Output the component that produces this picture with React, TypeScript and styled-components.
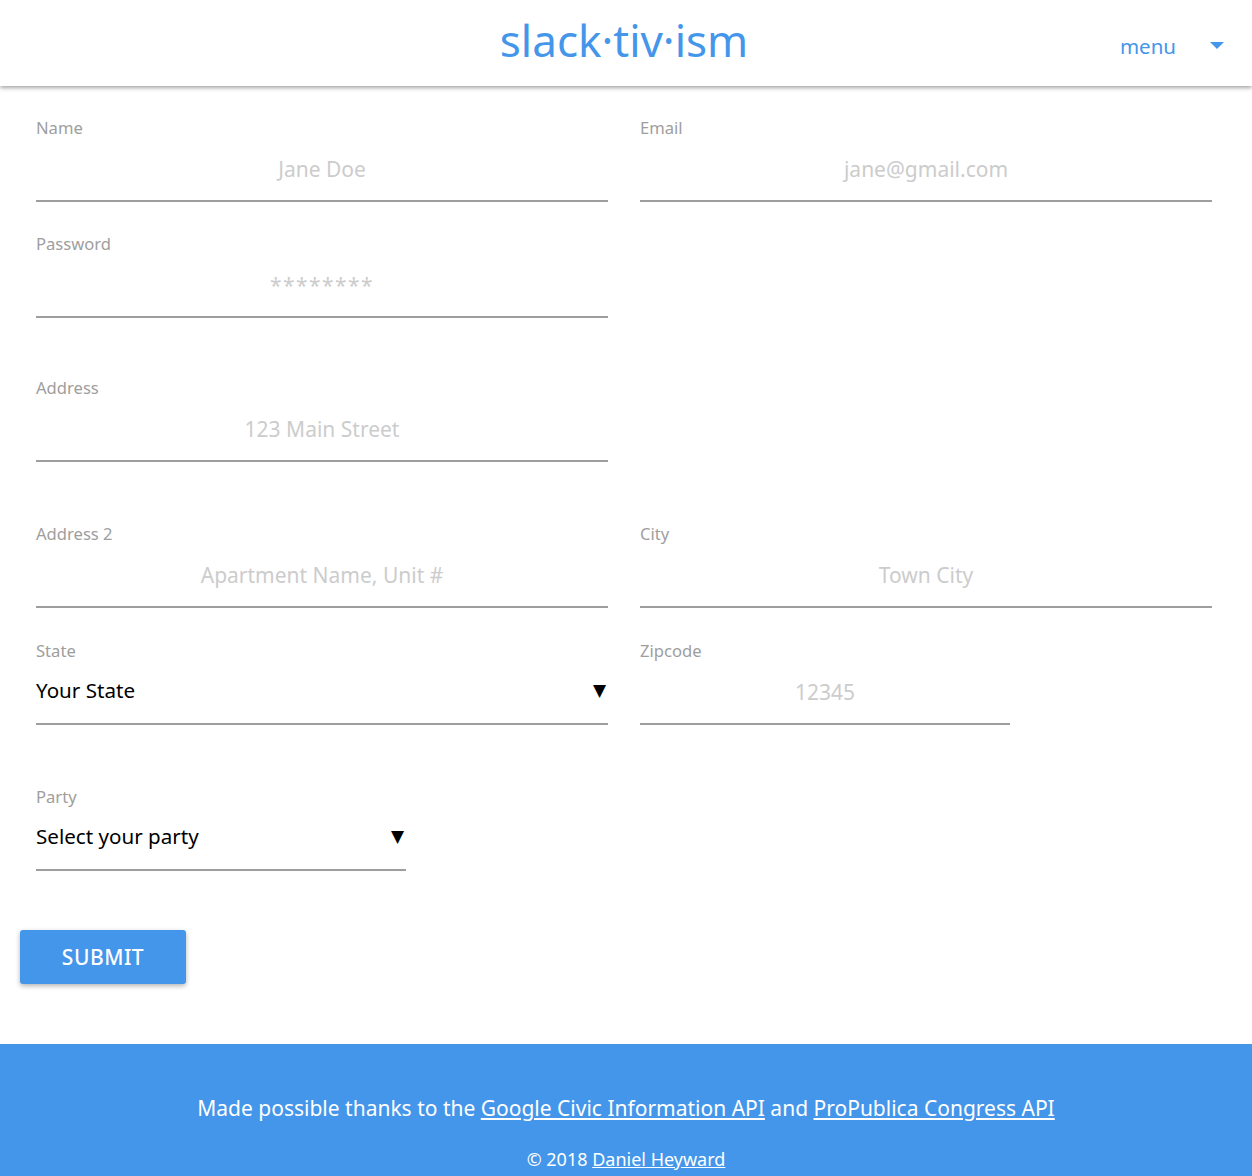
import { createGlobalStyle } from 'styled-components';
import styled from 'styled-components';

const GlobalStyle = createGlobalStyle`
    body {
        margin: 0;
        font-family: 'Noto Sans', 'Open Sans', sans-serif;
        background: #ffffff;
    }
    * {
        box-sizing: border-box;
    }
`;

const BLUE = '#4496ea';

interface FieldProps {
    label: string;
    placeholder: string;
    type?: string;
    narrow?: boolean;
}

const Field: React.FC<FieldProps> = ({ label, placeholder, type = 'text', narrow }) => {
    return (
        <FieldBox $narrow={narrow}>
            <Label>{label}</Label>
            <Input type={type} placeholder={placeholder} $wide={type === 'password'} />
        </FieldBox>
    );
};

interface SelectProps {
    label: string;
    value: string;
    narrow?: boolean;
}

const SelectField: React.FC<SelectProps> = ({ label, value, narrow }) => {
    return (
        <FieldBox $narrow={narrow}>
            <Label>{label}</Label>
            <SelectBox>
                <span>{value}</span>
                <Arrow>▼</Arrow>
            </SelectBox>
        </FieldBox>
    );
};

const App = () => {
    return (
        <>
            <GlobalStyle />
            <Header>
                <Logo>slack·tiv·ism</Logo>
                <Menu>
                    <MenuText>menu</MenuText>
                    <MenuCaret />
                </Menu>
            </Header>
            <Form>
                <Row>
                    <Field label="Name" placeholder="Jane Doe" />
                    <Field label="Email" placeholder="jane@gmail.com" />
                </Row>
                <Row $top={32}>
                    <Field label="Password" placeholder="********" type="password" />
                </Row>
                <Row $top={60}>
                    <Field label="Address" placeholder="123 Main Street" />
                </Row>
                <Row $top={62}>
                    <Field label="Address 2" placeholder="Apartment Name, Unit #" />
                    <Field label="City" placeholder="Town City" />
                </Row>
                <Row $top={33}>
                    <SelectField label="State" value="Your State" />
                    <Field label="Zipcode" placeholder="12345" narrow />
                </Row>
                <Row $top={62}>
                    <SelectField label="Party" value="Select your party" narrow />
                </Row>
                <SubmitButton type="button">SUBMIT</SubmitButton>
            </Form>
            <Footer>
                <FooterLine>
                    Made possible thanks to the <FooterLink href="#">Google Civic Information API</FooterLink> and{' '}
                    <FooterLink href="#">ProPublica Congress API</FooterLink>
                </FooterLine>
                <FooterSmall>
                    © 2018 <FooterLink href="#">Daniel Heyward</FooterLink>
                </FooterSmall>
            </Footer>
        </>
    );
};
export default App;

const Header = styled.header`
    position: relative;
    height: 86px;
    display: flex;
    align-items: center;
    justify-content: center;
    background: #ffffff;
    box-shadow: 0 2px 4px rgba(0, 0, 0, 0.35);
    z-index: 1;
`;

const Logo = styled.h1`
    margin: 0;
    font-size: 44px;
    font-weight: 400;
    color: ${BLUE};
    line-height: 1;
    padding: 0 4px 6px 0;
`;

const Menu = styled.div`
    position: absolute;
    right: 28px;
    top: 32px;
    display: flex;
    align-items: center;
    gap: 34px;
    color: ${BLUE};
    cursor: pointer;
`;

const MenuText = styled.span`
    font-size: 20.5px;
    line-height: 28px;
`;

const MenuCaret = styled.span`
    width: 0;
    height: 0;
    border-left: 7px solid transparent;
    border-right: 7px solid transparent;
    border-top: 7px solid ${BLUE};
    margin-top: -2px;
`;

const Form = styled.form`
    padding: 32px 40px 60px 36px;
    display: flex;
    flex-direction: column;
    align-items: flex-start;
`;

const Row = styled.div<{ $top?: number }>`
    display: grid;
    grid-template-columns: 572px 572px;
    column-gap: 32px;
    margin-top: ${({ $top }) => $top ?? 0}px;
    width: 100%;
`;

const FieldBox = styled.div<{ $narrow?: boolean }>`
    display: flex;
    flex-direction: column;
    width: ${({ $narrow }) => ($narrow ? '370px' : '100%')};
`;

const Label = styled.label`
    font-size: 16.6px;
    line-height: 20px;
    color: #9e9e9e;
`;

const Input = styled.input<{ $wide?: boolean }>`
    margin-top: 8px;
    height: 56px;
    padding: 4px 0 12px;
    border: none;
    border-bottom: 2px solid #9e9e9e;
    font-family: 'Noto Sans', 'Open Sans', sans-serif;
    font-size: 21px;
    letter-spacing: ${({ $wide }) => ($wide ? '1.4px' : 'normal')};
    text-align: center;
    color: #222222;
    outline: none;
    background: transparent;
    &::placeholder {
        color: #cccccc;
    }
`;

const SelectBox = styled.div`
    margin-top: 8px;
    height: 56px;
    padding: 0 2px 12px 0;
    display: flex;
    align-items: center;
    justify-content: space-between;
    border-bottom: 2px solid #9e9e9e;
    font-size: 20.6px;
    color: #000000;
    cursor: pointer;
`;

const Arrow = styled.span`
    font-family: 'DejaVu Sans', sans-serif;
    font-size: 17px;
    color: #000000;
`;

const SubmitButton = styled.button`
    margin-top: 59px;
    margin-left: -16px;
    width: 166px;
    height: 54px;
    border: none;
    border-radius: 3px;
    background: ${BLUE};
    color: #ffffff;
    font-family: 'Noto Sans', 'Open Sans', sans-serif;
    font-size: 21px;
    font-weight: 500;
    letter-spacing: 0.5px;
    box-shadow: 0 2px 5px rgba(0, 0, 0, 0.3);
    cursor: pointer;
`;

const Footer = styled.footer`
    background: ${BLUE};
    color: #ffffff;
    padding: 50px 20px 0;
    height: 132px;
    display: flex;
    flex-direction: column;
    align-items: center;
    text-align: center;
`;

const FooterLine = styled.p`
    margin: 0;
    font-size: 21px;
    line-height: 28px;
`;

const FooterSmall = styled.p`
    margin: 24px 0 0;
    font-size: 18px;
    line-height: 26px;
`;

const FooterLink = styled.a`
    color: #ffffff;
    text-decoration: underline;
`;
